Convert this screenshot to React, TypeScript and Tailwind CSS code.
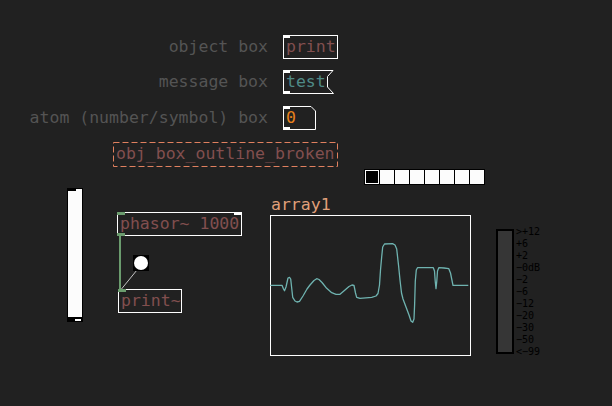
import React from "react";

const wave: [number, number][] = [
  [0.3, 70.3], [12, 70.3], [13.5, 74], [14.5, 75.7], [16, 72], [18, 63], [19.5, 62.3], [20.7, 64], [22.7, 82.3],
  [25, 86], [27, 87], [29.5, 86.3], [33, 81], [37, 74], [40, 70], [44, 65.5], [46.7, 63.7], [49, 64.5], [52, 67.5], [56.7, 73.3],
  [61.7, 77.7], [66, 79.3], [70, 79.3], [75, 75], [79, 71.5], [82, 70], [84, 70.5], [85.5, 78], [86.7, 82.3], [90, 83.3],
  [101.7, 82.3], [106, 81], [108, 78.5], [109.5, 70], [110.5, 55], [111.7, 41.7], [112.7, 32], [114.5, 29], [122.5, 28.6],
  [125, 30], [126.7, 34], [128.5, 50], [130, 65], [131.5, 78], [133, 84], [136, 92], [139, 100], [141, 106], [142.7, 107.3],
  [144, 104], [144.6, 90], [145.3, 66], [146.3, 55], [147.5, 52.7], [163.3, 52.7], [164.5, 56], [165.2, 66], [166, 73.7],
  [166.8, 66], [167.5, 56], [168.8, 52.7], [174, 53], [178.8, 53.7], [180.5, 58], [181.7, 64], [183, 70.3], [198.3, 70.3],
];

const vuLabels = [">+12", "+6", "+2", "−0dB", "−2", "−6", "−12", "−20", "−30", "−50", "<−99"];

export default function App() {
  return (
    <div className="relative w-[612px] h-[406px] overflow-hidden bg-[#212121] font-['DejaVu_Sans_Mono',monospace] text-[16.5px] leading-[20px]">
      {/* patch cords */}
      <svg className="absolute left-0 top-0" width={612} height={406}>
        <line x1={120} y1={236} x2={120} y2={289} stroke="#6b9c6e" strokeWidth={2} />
        <line x1={137} y1={270} x2={121.5} y2={289} stroke="#c4c4c4" strokeWidth={1} />
      </svg>

      {/* labelled boxes */}
      <div className="absolute left-0 top-[35px] grid w-[338px] grid-cols-[1fr_auto] items-center gap-x-[15px] gap-y-[11px]">
        <div className="justify-self-end whitespace-pre text-[#545454]">object box</div>
        <div className="relative flex h-[24px] w-[55px] items-center border border-white pl-[2px] text-[#824f4f]">
          <div className="absolute -left-px -top-px h-[3px] w-[7px] bg-white" />
          print
        </div>

        <div className="justify-self-end whitespace-pre text-[#545454]">message box</div>
        <div className="relative flex h-[24px] w-[51px] items-center pl-[3px] text-[#4f8a87]">
          <svg className="absolute left-0 top-0" width={51} height={24}>
            <polygon points="0.5,0.5 50,0.5 44.5,6.5 44.5,17 50.5,23.5 0.5,23.5" fill="none" stroke="#ffffff" strokeWidth={1} />
          </svg>
          <div className="absolute left-0 top-0 h-[3px] w-[7px] bg-white" />
          <div className="absolute bottom-0 left-0 h-[3px] w-[7px] bg-white" />
          <span className="relative">test</span>
        </div>

        <div className="mt-[1px] justify-self-end whitespace-pre text-[#545454]">atom (number/symbol) box</div>
        <div className="relative mt-[1px] flex h-[24px] w-[33px] items-center pl-[3px] text-[#e8811c]">
          <svg className="absolute left-0 top-0" width={33} height={24}>
            <polygon points="0.5,0.5 28,0.5 32.5,5 32.5,23.5 0.5,23.5" fill="none" stroke="#ffffff" strokeWidth={1} />
          </svg>
          <div className="absolute left-0 top-0 h-[3px] w-[7px] bg-white" />
          <div className="absolute bottom-0 left-0 h-[3px] w-[7px] bg-white" />
          <span className="relative">0</span>
        </div>
      </div>

      {/* broken object */}
      <div className="absolute left-[113px] top-[142px] h-[25px] w-[225px] pl-[3px] pt-[2px] leading-[20px] text-[#824f4f]">
        <svg className="absolute left-0 top-0" width={225} height={25}>
          <rect x={0.5} y={0.5} width={224} height={24} fill="none" stroke="#e0805f" strokeWidth={1} strokeDasharray="6 3" />
        </svg>
        <span className="relative whitespace-pre">obj_box_outline_broken</span>
      </div>

      {/* hradio */}
      <div className="absolute left-[364px] top-[169px] flex h-[16px] w-[121px] gap-[1px] bg-black p-[1px]">
        <div className="h-[14px] w-[14px] bg-[#fcfcfc] pl-[1px] pt-[1px]">
          <div className="h-[12px] w-[12px] bg-black" />
        </div>
        <div className="h-[14px] w-[14px] bg-[#fcfcfc]" />
        <div className="h-[14px] w-[14px] bg-[#fcfcfc]" />
        <div className="h-[14px] w-[14px] bg-[#fcfcfc]" />
        <div className="h-[14px] w-[14px] bg-[#fcfcfc]" />
        <div className="h-[14px] w-[14px] bg-[#fcfcfc]" />
        <div className="h-[14px] w-[14px] bg-[#fcfcfc]" />
        <div className="h-[14px] w-[14px] bg-[#fcfcfc]" />
      </div>

      {/* vslider */}
      <div className="absolute left-[67px] top-[188px] flex h-[134px] w-[16px] flex-col justify-between border border-black bg-[#fcfcfc]">
        <div className="h-[2px] w-[8px] bg-black" />
        <div className="relative h-[4px] w-full bg-black">
          <div className="absolute bottom-0 right-[1px] h-[2px] w-[6px] bg-white" />
        </div>
      </div>

      {/* phasor~ */}
      <div className="absolute left-[117px] top-[212px] flex h-[24px] w-[125px] items-center border border-white pl-[2px] text-[#824f4f]">
        <div className="absolute -left-px -top-px h-[3px] w-[8px] bg-[#6b9c6e]" />
        <div className="absolute -right-px -top-px h-[3px] w-[8px] bg-white" />
        <div className="absolute -bottom-px -left-px h-[3px] w-[8px] bg-[#6b9c6e]" />
        phasor~ 1000
      </div>

      {/* bang */}
      <div className="absolute left-[133px] top-[255px] h-[16px] w-[16px] bg-black p-[1px]">
        <div className="h-full w-full rounded-full bg-white" />
      </div>

      {/* print~ */}
      <div className="absolute left-[118px] top-[289px] flex h-[24px] w-[64px] items-center border border-white pl-[2px] text-[#824f4f]">
        <div className="absolute -left-px -top-px h-[3px] w-[8px] bg-[#6b9c6e]" />
        print~
      </div>

      {/* array */}
      <div className="absolute left-[270px] top-[195px] flex flex-col">
        <div className="pl-[1px] text-[#e0a07a]">array1</div>
        <svg width={201} height={141}>
          <rect x={0.5} y={0.5} width={200} height={140} fill="none" stroke="#ffffff" strokeWidth={1} />
          <polyline
            points={wave.map((p) => p.join(",")).join(" ")}
            fill="none"
            stroke="#6fb3b0"
            strokeWidth={1.3}
            strokeLinejoin="round"
          />
        </svg>
      </div>

      {/* vu meter */}
      <div className="absolute left-[496px] top-[226px] flex gap-[2px]">
        <div className="mt-[3px] h-[125px] w-[18px] border-2 border-black bg-[#363636]" />
        <div className="flex flex-col text-[10px] leading-[12px] text-black">
          {vuLabels.map((l) => (
            <div key={l} className="h-[12px] whitespace-pre">{l}</div>
          ))}
        </div>
      </div>
    </div>
  );
}
